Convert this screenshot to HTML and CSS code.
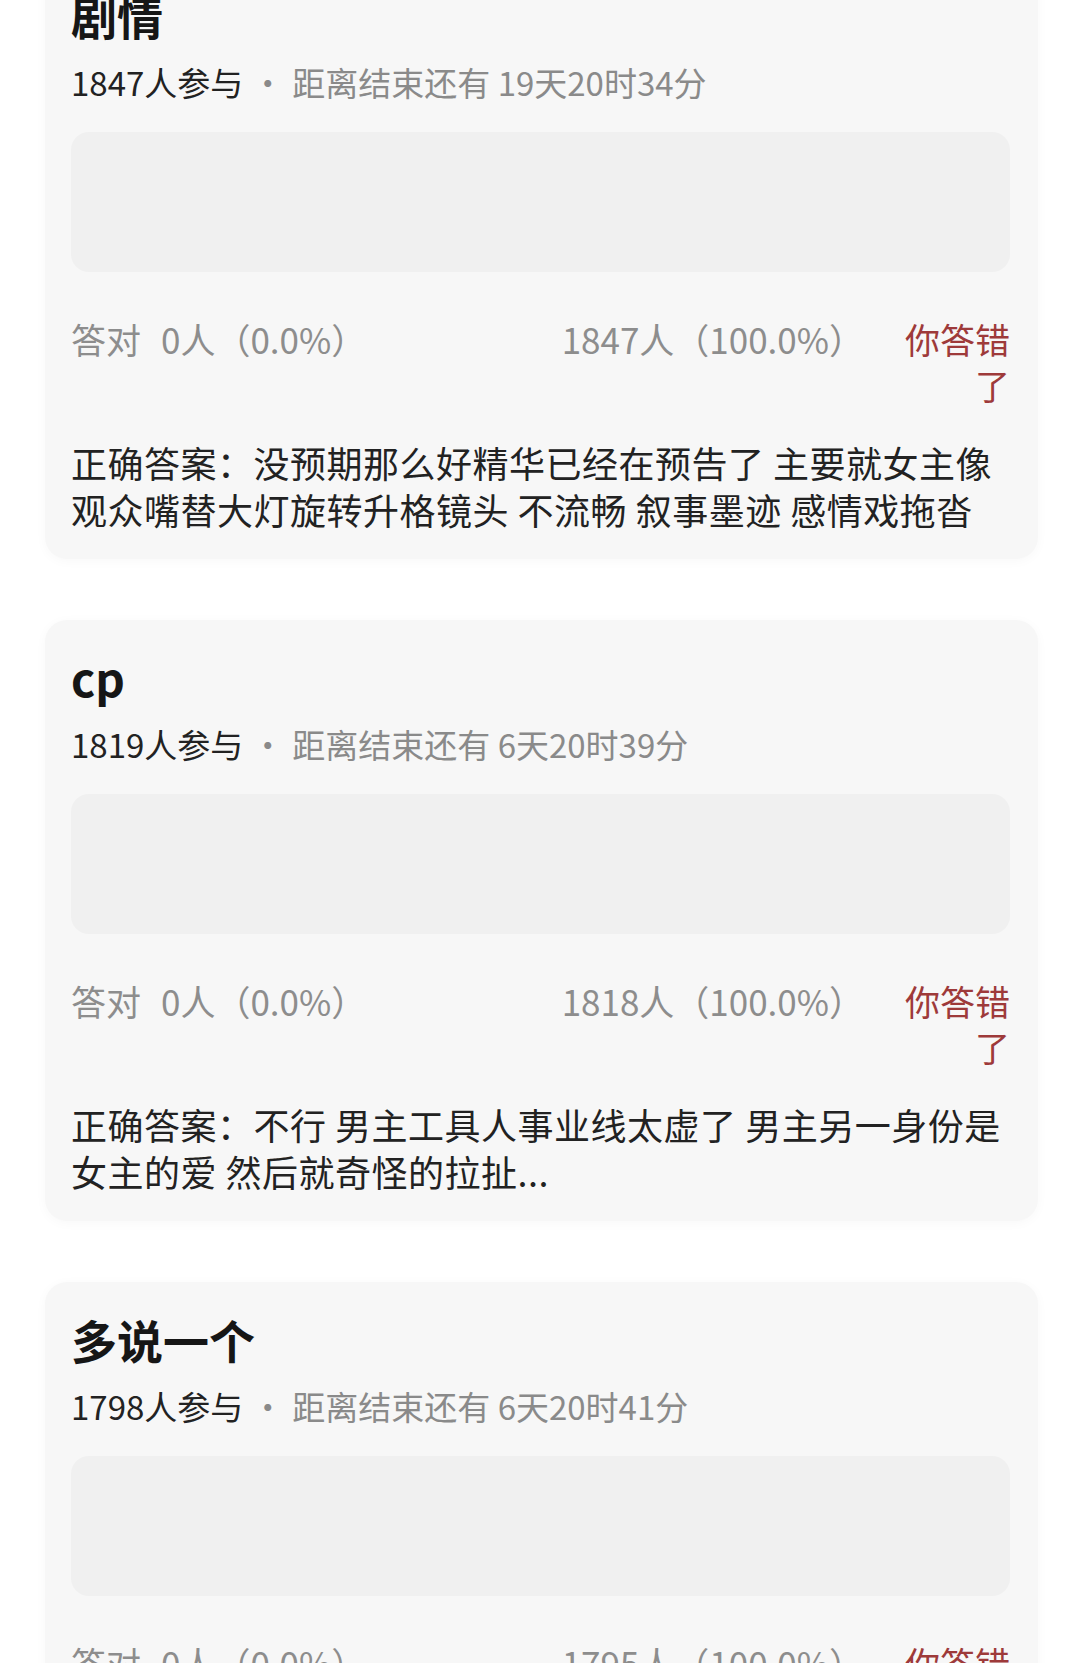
FILE: index.html
```html
<!DOCTYPE html>
<html lang="zh-CN">
  <head>
    <meta charset="UTF-8" />
    <meta name="viewport" content="width=device-width, initial-scale=1.0" />
    <title>竞猜</title>
    <link rel="stylesheet" href="styles.css">
  </head>
  <body>

    <div class="list">

      <div class="card">
        <h2 class="title">剧情</h2>
        <div class="meta">
          <span class="count">1847人参与</span><span class="dot">·</span><span class="left">距离结束还有 19天20时34分</span>
        </div>
        <div class="pic"></div>
        <div class="stats">
          <div class="right-num"><span>答对</span><span class="num">0人（0.0%）</span></div>
          <div class="wrong-num">1847人（100.0%）</div>
          <div class="result">你答错了</div>
        </div>
        <p class="answer">正确答案：没预期那么好精华已经在预告了 主要就女主像观众嘴替大灯旋转升格镜头 不流畅 叙事墨迹 感情戏拖沓</p>
      </div>

      <div class="card">
        <h2 class="title">cp</h2>
        <div class="meta">
          <span class="count">1819人参与</span><span class="dot">·</span><span class="left">距离结束还有 6天20时39分</span>
        </div>
        <div class="pic"></div>
        <div class="stats">
          <div class="right-num"><span>答对</span><span class="num">0人（0.0%）</span></div>
          <div class="wrong-num">1818人（100.0%）</div>
          <div class="result">你答错了</div>
        </div>
        <p class="answer">正确答案：不行 男主工具人事业线太虚了 男主另一身份是女主的爱 然后就奇怪的拉扯...</p>
      </div>

      <div class="card">
        <h2 class="title">多说一个</h2>
        <div class="meta">
          <span class="count">1798人参与</span><span class="dot">·</span><span class="left">距离结束还有 6天20时41分</span>
        </div>
        <div class="pic"></div>
        <div class="stats">
          <div class="right-num"><span>答对</span><span class="num">0人（0.0%）</span></div>
          <div class="wrong-num">1795人（100.0%）</div>
          <div class="result">你答错了</div>
        </div>
        <p class="answer">正确答案：</p>
      </div>

    </div>

  </body>
</html>
```

FILE: styles.css
```css
body {
    margin: 0;
    background: #fff;
    font-family: "Noto Sans CJK SC", "Noto Sans", sans-serif;
    color: #1e1e1e;
}

.list {
    display: flex;
    flex-direction: column;
    gap: 61px;
    margin-top: -42px;
    padding: 0 42px 40px 45px;
}

.card {
    background: #f7f7f7;
    border-radius: 22px;
    box-shadow: 0 2px 12px rgba(0, 0, 0, 0.03);
    padding: 27px 28px 26px 26px;
}

.title {
    margin: 0;
    font-size: 46px;
    line-height: 60px;
    font-weight: bold;
    color: #161616;
}

.meta {
    margin-top: 15px;
    font-size: 33px;
    line-height: 44px;
    color: #8a8a8a;
}

.meta .count {
    color: #222;
}

.meta .dot {
    margin: 0 8px;
}

.pic {
    margin-top: 28px;
    height: 140px;
    border-radius: 18px;
    background: #f0f0f0;
}

.stats {
    margin-top: 44px;
    display: grid;
    grid-template-columns: 1fr auto 110px;
    column-gap: 36px;
    font-size: 35px;
    line-height: 46px;
    color: #8d8d8d;
}

.right-num .num {
    margin-left: 20px;
}

.result {
    text-align: right;
    color: #9e3a3a;
}

.answer {
    margin: 31px 0 0;
    font-size: 36px;
    line-height: 47px;
    letter-spacing: 0.5px;
    color: #222;
}
```
